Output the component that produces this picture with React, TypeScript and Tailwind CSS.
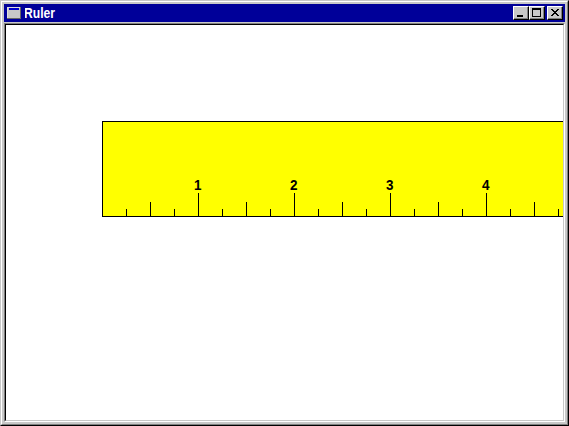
const INCH = 96;
const ticks = Array.from({ length: 19 }, (_, i) => i + 1);
const inches = [1, 2, 3, 4];

function tickHeight(quarter: number) {
  if (quarter % 4 === 0) return 23;
  return quarter % 2 === 0 ? 14 : 7;
}

function CaptionButton({ kind }: { kind: "min" | "max" | "close" }) {
  return (
    <button
      aria-label={kind}
      className="h-[14px] w-4 border border-t-white border-l-white border-r-black border-b-black bg-[#c8c8c8] shadow-[inset_-1px_-1px_#808080]"
    >
      <svg width="14" height="12" shapeRendering="crispEdges" className="block">
        {kind === "min" && <rect x="3" y="8" width="6" height="2" />}
        {kind === "max" && <path fillRule="evenodd" d="M2 1h9v9h-9zM3 3v6h7v-6z" />}
        {kind === "close" && (
          <path d="M3 2h2v1h1v1h2v-1h1v-1h2v1h-1v1h-1v1h-1v1h1v1h1v1h1v1h-2v-1h-1v-1h-2v1h-1v1h-2v-1h1v-1h1v-1h1v-1h-1v-1h-1v-1h-1z" />
        )}
      </svg>
    </button>
  );
}

export default function App() {
  return (
    <div className="h-[426px] w-[569px] border border-t-[#c8c8c8] border-l-[#c8c8c8] border-r-black border-b-black font-['Liberation_Sans',Arial,sans-serif]">
      <div className="flex h-full flex-col border border-t-white border-l-white border-r-[#808080] border-b-[#808080] bg-[#c8c8c8] p-[2px]">
        <header className="flex h-[18px] shrink-0 items-center bg-[#000099] px-[2px]">
          <svg width="16" height="16" shapeRendering="crispEdges" className="mr-[3px]">
            <rect x="1" y="2" width="14" height="12" fill="#666" />
            <rect x="1" y="2" width="13" height="11" fill="#ddd" />
            <rect x="2" y="3" width="12" height="10" fill="#c8c8c8" />
            <rect x="3" y="3" width="10" height="2" fill="#0000cc" />
          </svg>
          <svg width="60" height="18" className="mr-auto">
            <text x="-1" y="13.5" fontSize="14" fontWeight="700" textLength="31" lengthAdjust="spacingAndGlyphs" fill="#fff">
              Ruler
            </text>
          </svg>
          <CaptionButton kind="min" />
          <CaptionButton kind="max" />
          <div className="w-[2px]" />
          <CaptionButton kind="close" />
        </header>
        <main className="mt-px min-h-0 flex-1 border border-t-[#808080] border-l-[#808080] border-r-white border-b-white">
          <div className="h-full overflow-hidden border border-t-black border-l-black border-r-[#c8c8c8] border-b-[#c8c8c8] bg-white pt-24 pl-24">
            <svg width="461" height="96" shapeRendering="crispEdges" className="block">
              <rect width="461" height="96" fill="black" />
              <rect x="1" y="1" width="460" height="94" fill="#ffff00" />
              {ticks.map((n) => (
                <rect key={n} x={n * (INCH / 4)} y={95 - tickHeight(n)} width="1" height={tickHeight(n)} />
              ))}
              {inches.map((n) => (
                <text key={n} x={n * INCH - 4} y="69" fontSize="15" fontWeight="700" textLength="7.5" lengthAdjust="spacingAndGlyphs">
                  {n}
                </text>
              ))}
            </svg>
          </div>
        </main>
      </div>
    </div>
  );
}
